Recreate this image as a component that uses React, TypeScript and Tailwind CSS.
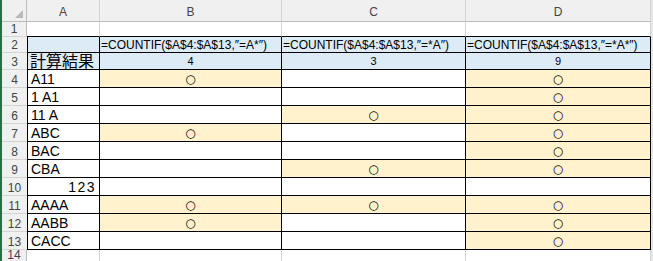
import React from "react";

type Row = { n: number; a: string; right?: boolean; b: boolean; c: boolean; d: boolean };

const rows: Row[] = [
  { n: 4, a: "A11", b: true, c: false, d: true },
  { n: 5, a: "1 A1", b: false, c: false, d: true },
  { n: 6, a: "11 A", b: false, c: true, d: true },
  { n: 7, a: "ABC", b: true, c: false, d: true },
  { n: 8, a: "BAC", b: false, c: false, d: true },
  { n: 9, a: "CBA", b: false, c: true, d: true },
  { n: 10, a: "123", right: true, b: false, c: false, d: false },
  { n: 11, a: "AAAA", b: true, c: true, d: true },
  { n: 12, a: "AABB", b: true, c: false, d: true },
  { n: 13, a: "CACC", b: false, c: false, d: true },
];

const formulas = [
  "=COUNTIF($A$4:$A$13,″=A*″)",
  "=COUNTIF($A$4:$A$13,″=*A″)",
  "=COUNTIF($A$4:$A$13,″=*A*″)",
];
const counts = ["4", "3", "9"];

const font = { fontFamily: '"Liberation Sans", "Noto Sans CJK JP", sans-serif' };

const RowHead = ({ n, edge }: { n: number; edge?: boolean }) => (
  <div
    className={
      "flex items-end justify-center pb-[1px] bg-[#f0f0f0] text-[12px] leading-none text-[#444] border-b border-[#d4d4d4] " +
      (edge ? "border-r border-r-[#bdbdbd]" : "")
    }
  >
    {n}
  </div>
);

const Mark = ({ on }: { on: boolean }) => (
  <div
    className={
      "flex items-end justify-center pb-[2px] border-r border-b border-black text-[12px] leading-none " +
      (on ? "bg-[#fff2cc]" : "bg-white")
    }
    style={{ fontFamily: '"DejaVu Sans", sans-serif' }}
  >
    {on ? "○" : ""}
  </div>
);

export default function App() {
  return (
    <div className="flex w-[653px] h-[261px] overflow-hidden bg-white text-black" style={font}>
      <div className="w-[2px] shrink-0 bg-[#217346]" />
      <div className="grid grid-cols-[25px_73px_182px_184px_185px_2px] grid-rows-[22px_15px_16px_17px_repeat(10,18px)_11px]">
        {/* column headers */}
        <div className="relative bg-[#f0f0f0] border-r border-b border-[#bdbdbd]">
          <svg className="absolute right-[3px] bottom-[3px]" width="8" height="8" viewBox="0 0 8 8">
            <polygon points="8,0 8,8 0,8" fill="#b9b9b9" />
          </svg>
        </div>
        {["A", "B", "C", "D"].map((c) => (
          <div
            key={c}
            className="flex items-center justify-center pt-[2px] bg-[#f0f0f0] text-[12px] text-[#444] border-r border-r-[#d4d4d4] border-b border-b-[#bdbdbd]"
          >
            {c}
          </div>
        ))}
        <div className="bg-[#e6e6e6]" />

        {/* row 1 */}
        <RowHead n={1} edge />
        <div className="border-r border-r-[#d4d4d4] border-b border-b-black" />
        <div className="border-r border-r-[#d4d4d4] border-b border-b-black" />
        <div className="border-r border-r-[#d4d4d4] border-b border-b-black" />
        <div className="border-r border-r-[#d4d4d4] border-b border-b-black" />
        <div className="bg-[#e6e6e6]" />

        {/* row 2 */}
        <RowHead n={2} />
        <div className="bg-[#ddebf7] border-l border-r border-b border-black" />
        {formulas.map((f) => (
          <div
            key={f}
            className="flex items-end pl-[1px] bg-[#ddebf7] border-r border-b border-black text-[12px] leading-none pb-[1px] whitespace-nowrap overflow-hidden"
          >
            {f}
          </div>
        ))}
        <div className="bg-[#e6e6e6]" />

        {/* row 3 */}
        <RowHead n={3} />
        <div
          className="flex items-end pl-[2px] bg-[#ddebf7] border-l border-r border-b border-black text-[16px] leading-none pb-[1px]"
          style={{ fontFamily: '"Noto Sans CJK JP", sans-serif' }}
        >
          計算結果
        </div>
        {counts.map((c, i) => (
          <div
            key={i}
            className="flex items-end justify-center bg-[#ddebf7] border-r border-b border-black text-[11px] leading-none pb-[2px]"
          >
            {c}
          </div>
        ))}
        <div className="bg-[#e6e6e6]" />

        {/* rows 4-13 */}
        {rows.map((r) => (
          <React.Fragment key={r.n}>
            <RowHead n={r.n} />
            <div
              className={
                "flex items-end px-[3px] pb-[1px] bg-white border-l border-r border-b border-black text-[14px] leading-none " +
                (r.right ? "justify-end tracking-[1.5px]" : "")
              }
            >
              {r.a}
            </div>
            <Mark on={r.b} />
            <Mark on={r.c} />
            <Mark on={r.d} />
            <div className="bg-[#e6e6e6]" />
          </React.Fragment>
        ))}

        {/* row 14 */}
        <div className="flex items-end justify-center bg-[#f0f0f0] text-[12px] text-[#444] border-r border-[#bdbdbd] leading-none">
          14
        </div>
        <div className="border-r border-[#d4d4d4]" />
        <div className="border-r border-[#d4d4d4]" />
        <div className="border-r border-[#d4d4d4]" />
        <div className="border-r border-[#d4d4d4]" />
        <div className="bg-[#e6e6e6]" />
      </div>
    </div>
  );
}
